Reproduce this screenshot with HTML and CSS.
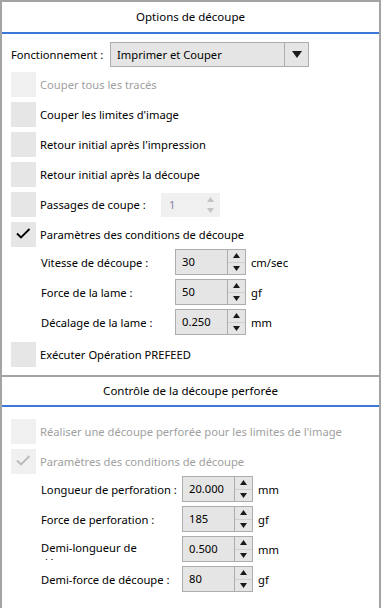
FILE: index.html
```html
<!DOCTYPE html>
<html lang="fr">
<head>
    <meta charset="UTF-8">
    <meta name="viewport" content="width=device-width, initial-scale=1.0">
    <title>Options de découpe</title>
    <link rel="stylesheet" href="styles.css">
</head>
<body>
    <div class="panel">
        <section class="group">
            <h2 class="group-title">Options de découpe</h2>
            <div class="group-body">
                <div class="select-row">
                    <span class="select-label">Fonctionnement :</span>
                    <div class="select">
                        <span class="select-value">Imprimer et Couper</span>
                        <span class="select-btn">
                            <svg width="10" height="7" viewBox="0 0 10 7"><path d="M0 0 H10 L5 7 Z" fill="#1a1a1a"/></svg>
                        </span>
                    </div>
                </div>
                <div class="check disabled"><span class="box"></span>Couper tous les tracés</div>
                <div class="check"><span class="box"></span>Couper les limites d'image</div>
                <div class="check"><span class="box"></span>Retour initial après l'impression</div>
                <div class="check"><span class="box"></span>Retour initial après la découpe</div>
                <div class="check">
                    <span class="box"></span>
                    <span class="passes-label">Passages de coupe :</span>
                    <div class="spin spin-off">
                        <span class="spin-value">1</span>
                        <span class="spin-arrows">
                            <span class="arrow"><svg width="7" height="5" viewBox="0 0 7 5"><path d="M3.5 0 L7 5 H0 Z"/></svg></span>
                            <span class="arrow"><svg width="7" height="5" viewBox="0 0 7 5"><path d="M0 0 H7 L3.5 5 Z"/></svg></span>
                        </span>
                    </div>
                </div>
                <div class="check">
                    <span class="box"><svg width="25" height="25" viewBox="0 0 25 25"><path d="M6 11.5 L10 15.5 L18.5 7" fill="none" stroke="#000" stroke-width="1.8"/></svg></span>
                    Paramètres des conditions de découpe
                </div>
                <div class="params">
                    <div class="param">
                        <span class="param-label">Vitesse de découpe :</span>
                        <div class="spin">
                            <span class="spin-value">30</span>
                            <span class="spin-arrows">
                                <span class="arrow"><svg width="7" height="5" viewBox="0 0 7 5"><path d="M3.5 0 L7 5 H0 Z"/></svg></span>
                                <span class="arrow"><svg width="7" height="5" viewBox="0 0 7 5"><path d="M0 0 H7 L3.5 5 Z"/></svg></span>
                            </span>
                        </div>
                        <span class="unit">cm/sec</span>
                    </div>
                    <div class="param">
                        <span class="param-label">Force de la lame :</span>
                        <div class="spin">
                            <span class="spin-value">50</span>
                            <span class="spin-arrows">
                                <span class="arrow"><svg width="7" height="5" viewBox="0 0 7 5"><path d="M3.5 0 L7 5 H0 Z"/></svg></span>
                                <span class="arrow"><svg width="7" height="5" viewBox="0 0 7 5"><path d="M0 0 H7 L3.5 5 Z"/></svg></span>
                            </span>
                        </div>
                        <span class="unit">gf</span>
                    </div>
                    <div class="param">
                        <span class="param-label">Décalage de la lame :</span>
                        <div class="spin">
                            <span class="spin-value">0.250</span>
                            <span class="spin-arrows">
                                <span class="arrow"><svg width="7" height="5" viewBox="0 0 7 5"><path d="M3.5 0 L7 5 H0 Z"/></svg></span>
                                <span class="arrow"><svg width="7" height="5" viewBox="0 0 7 5"><path d="M0 0 H7 L3.5 5 Z"/></svg></span>
                            </span>
                        </div>
                        <span class="unit">mm</span>
                    </div>
                </div>
                <div class="check"><span class="box"></span>Exécuter Opération PREFEED</div>
            </div>
        </section>

        <section class="group group-second">
            <h2 class="group-title">Contrôle de la découpe perforée</h2>
            <div class="group-body">
                <div class="check disabled"><span class="box"></span>Réaliser une découpe perforée pour les limites de l'image</div>
                <div class="check disabled">
                    <span class="box"><svg width="25" height="25" viewBox="0 0 25 25"><path d="M6 11.5 L10 15.5 L18.5 7" fill="none" stroke="#b9b9b9" stroke-width="1.8"/></svg></span>
                    Paramètres des conditions de découpe
                </div>
                <div class="params wide">
                    <div class="param">
                        <span class="param-label">Longueur de perforation :</span>
                        <div class="spin">
                            <span class="spin-value">20.000</span>
                            <span class="spin-arrows">
                                <span class="arrow"><svg width="7" height="5" viewBox="0 0 7 5"><path d="M3.5 0 L7 5 H0 Z"/></svg></span>
                                <span class="arrow"><svg width="7" height="5" viewBox="0 0 7 5"><path d="M0 0 H7 L3.5 5 Z"/></svg></span>
                            </span>
                        </div>
                        <span class="unit">mm</span>
                    </div>
                    <div class="param">
                        <span class="param-label">Force de perforation :</span>
                        <div class="spin">
                            <span class="spin-value">185</span>
                            <span class="spin-arrows">
                                <span class="arrow"><svg width="7" height="5" viewBox="0 0 7 5"><path d="M3.5 0 L7 5 H0 Z"/></svg></span>
                                <span class="arrow"><svg width="7" height="5" viewBox="0 0 7 5"><path d="M0 0 H7 L3.5 5 Z"/></svg></span>
                            </span>
                        </div>
                        <span class="unit">gf</span>
                    </div>
                    <div class="param">
                        <span class="param-label clipped">Demi-longueur de découpe :</span>
                        <div class="spin">
                            <span class="spin-value">0.500</span>
                            <span class="spin-arrows">
                                <span class="arrow"><svg width="7" height="5" viewBox="0 0 7 5"><path d="M3.5 0 L7 5 H0 Z"/></svg></span>
                                <span class="arrow"><svg width="7" height="5" viewBox="0 0 7 5"><path d="M0 0 H7 L3.5 5 Z"/></svg></span>
                            </span>
                        </div>
                        <span class="unit">mm</span>
                    </div>
                    <div class="param">
                        <span class="param-label">Demi-force de découpe :</span>
                        <div class="spin">
                            <span class="spin-value">80</span>
                            <span class="spin-arrows">
                                <span class="arrow"><svg width="7" height="5" viewBox="0 0 7 5"><path d="M3.5 0 L7 5 H0 Z"/></svg></span>
                                <span class="arrow"><svg width="7" height="5" viewBox="0 0 7 5"><path d="M0 0 H7 L3.5 5 Z"/></svg></span>
                            </span>
                        </div>
                        <span class="unit">gf</span>
                    </div>
                </div>
            </div>
        </section>
    </div>
</body>
</html>
```

FILE: styles.css
```css
html, body {
    margin: 0;
    padding: 0;
    overflow: hidden;
}
body {
    font-family: "Noto Sans", "Open Sans", sans-serif;
    font-size: 11.2px;
    color: #000;
    background: #fff;
}
.panel {
    height: 100vh;
    box-sizing: border-box;
    border: 2px solid #a3a3a3;
    border-bottom: none;
}
.group-title {
    margin: 0;
    height: 30px;
    line-height: 30px;
    text-align: center;
    font-size: 11.5px;
    font-weight: normal;
    border-bottom: 2px solid #3b78d8;
}
.group-body {
    display: flex;
    flex-direction: column;
    gap: 5px;
    padding: 8px 0 8px 9px;
}
.group-second {
    border-top: 2px solid #a3a3a3;
}
.group-second .group-title {
    height: 28px;
    line-height: 28px;
}
.group-second .group-body {
    padding-top: 12px;
}

/* liste deroulante */
.select-row {
    display: flex;
    align-items: center;
    height: 25px;
}
.select-label {
    width: 99px;
}
.select {
    display: flex;
    width: 199px;
    height: 25px;
    box-sizing: border-box;
    border: 1px solid #adadad;
    background: #e5e5e5;
}
.select-value {
    flex: 1;
    padding-left: 6px;
    line-height: 23px;
}
.select-btn {
    width: 23px;
    border-left: 1px solid #adadad;
    display: flex;
    align-items: center;
    justify-content: center;
}

/* cases a cocher */
.check {
    display: flex;
    align-items: center;
    height: 25px;
}
.box {
    width: 25px;
    height: 25px;
    flex: none;
    margin-right: 4px;
    background: #e6e6e6;
}
.box svg {
    display: block;
}
.check.disabled {
    color: #a0a0a0;
}
.check.disabled .box {
    background: #f0f0f0;
}
.passes-label {
    width: 121px;
}

/* champs numeriques */
.spin {
    display: flex;
    width: 71px;
    height: 26px;
    box-sizing: border-box;
    border: 1px solid #adadad;
    background: #e5e5e5;
}
.spin-value {
    flex: 1;
    padding-left: 6px;
    line-height: 24px;
}
.spin-arrows {
    width: 17px;
    border-left: 1px solid #adadad;
    display: flex;
    flex-direction: column;
}
.arrow {
    flex: 1;
    display: flex;
    align-items: center;
    justify-content: center;
}
.arrow:first-child {
    border-bottom: 1px solid #cfcfcf;
}
.arrow svg {
    fill: #1a1a1a;
}
.spin-off {
    width: 59px;
    height: 24px;
    border-color: #f0f0f0;
    background: #f0f0f0;
}
.spin-off .spin-value {
    color: #8c84a8;
    line-height: 22px;
    padding-left: 7px;
}
.spin-off .spin-arrows {
    border-left: none;
}
.spin-off .arrow:first-child {
    border-bottom: none;
}
.spin-off .arrow svg {
    fill: #c4c4c4;
}

.params {
    display: flex;
    flex-direction: column;
    gap: 4px;
    margin: -3px 0 2px 30px;
}
.param {
    display: flex;
    align-items: center;
    height: 26px;
}
.param-label {
    width: 134px;
    flex: none;
}
.params.wide .param-label {
    width: 141px;
}
.params.wide .param-label.clipped {
    align-self: flex-start;
    margin-top: 4px;
    height: 20px;
    line-height: 15px;
    overflow: hidden;
    width: 120px;
    margin-right: 21px;
}
.unit {
    margin-left: 5px;
}
```
